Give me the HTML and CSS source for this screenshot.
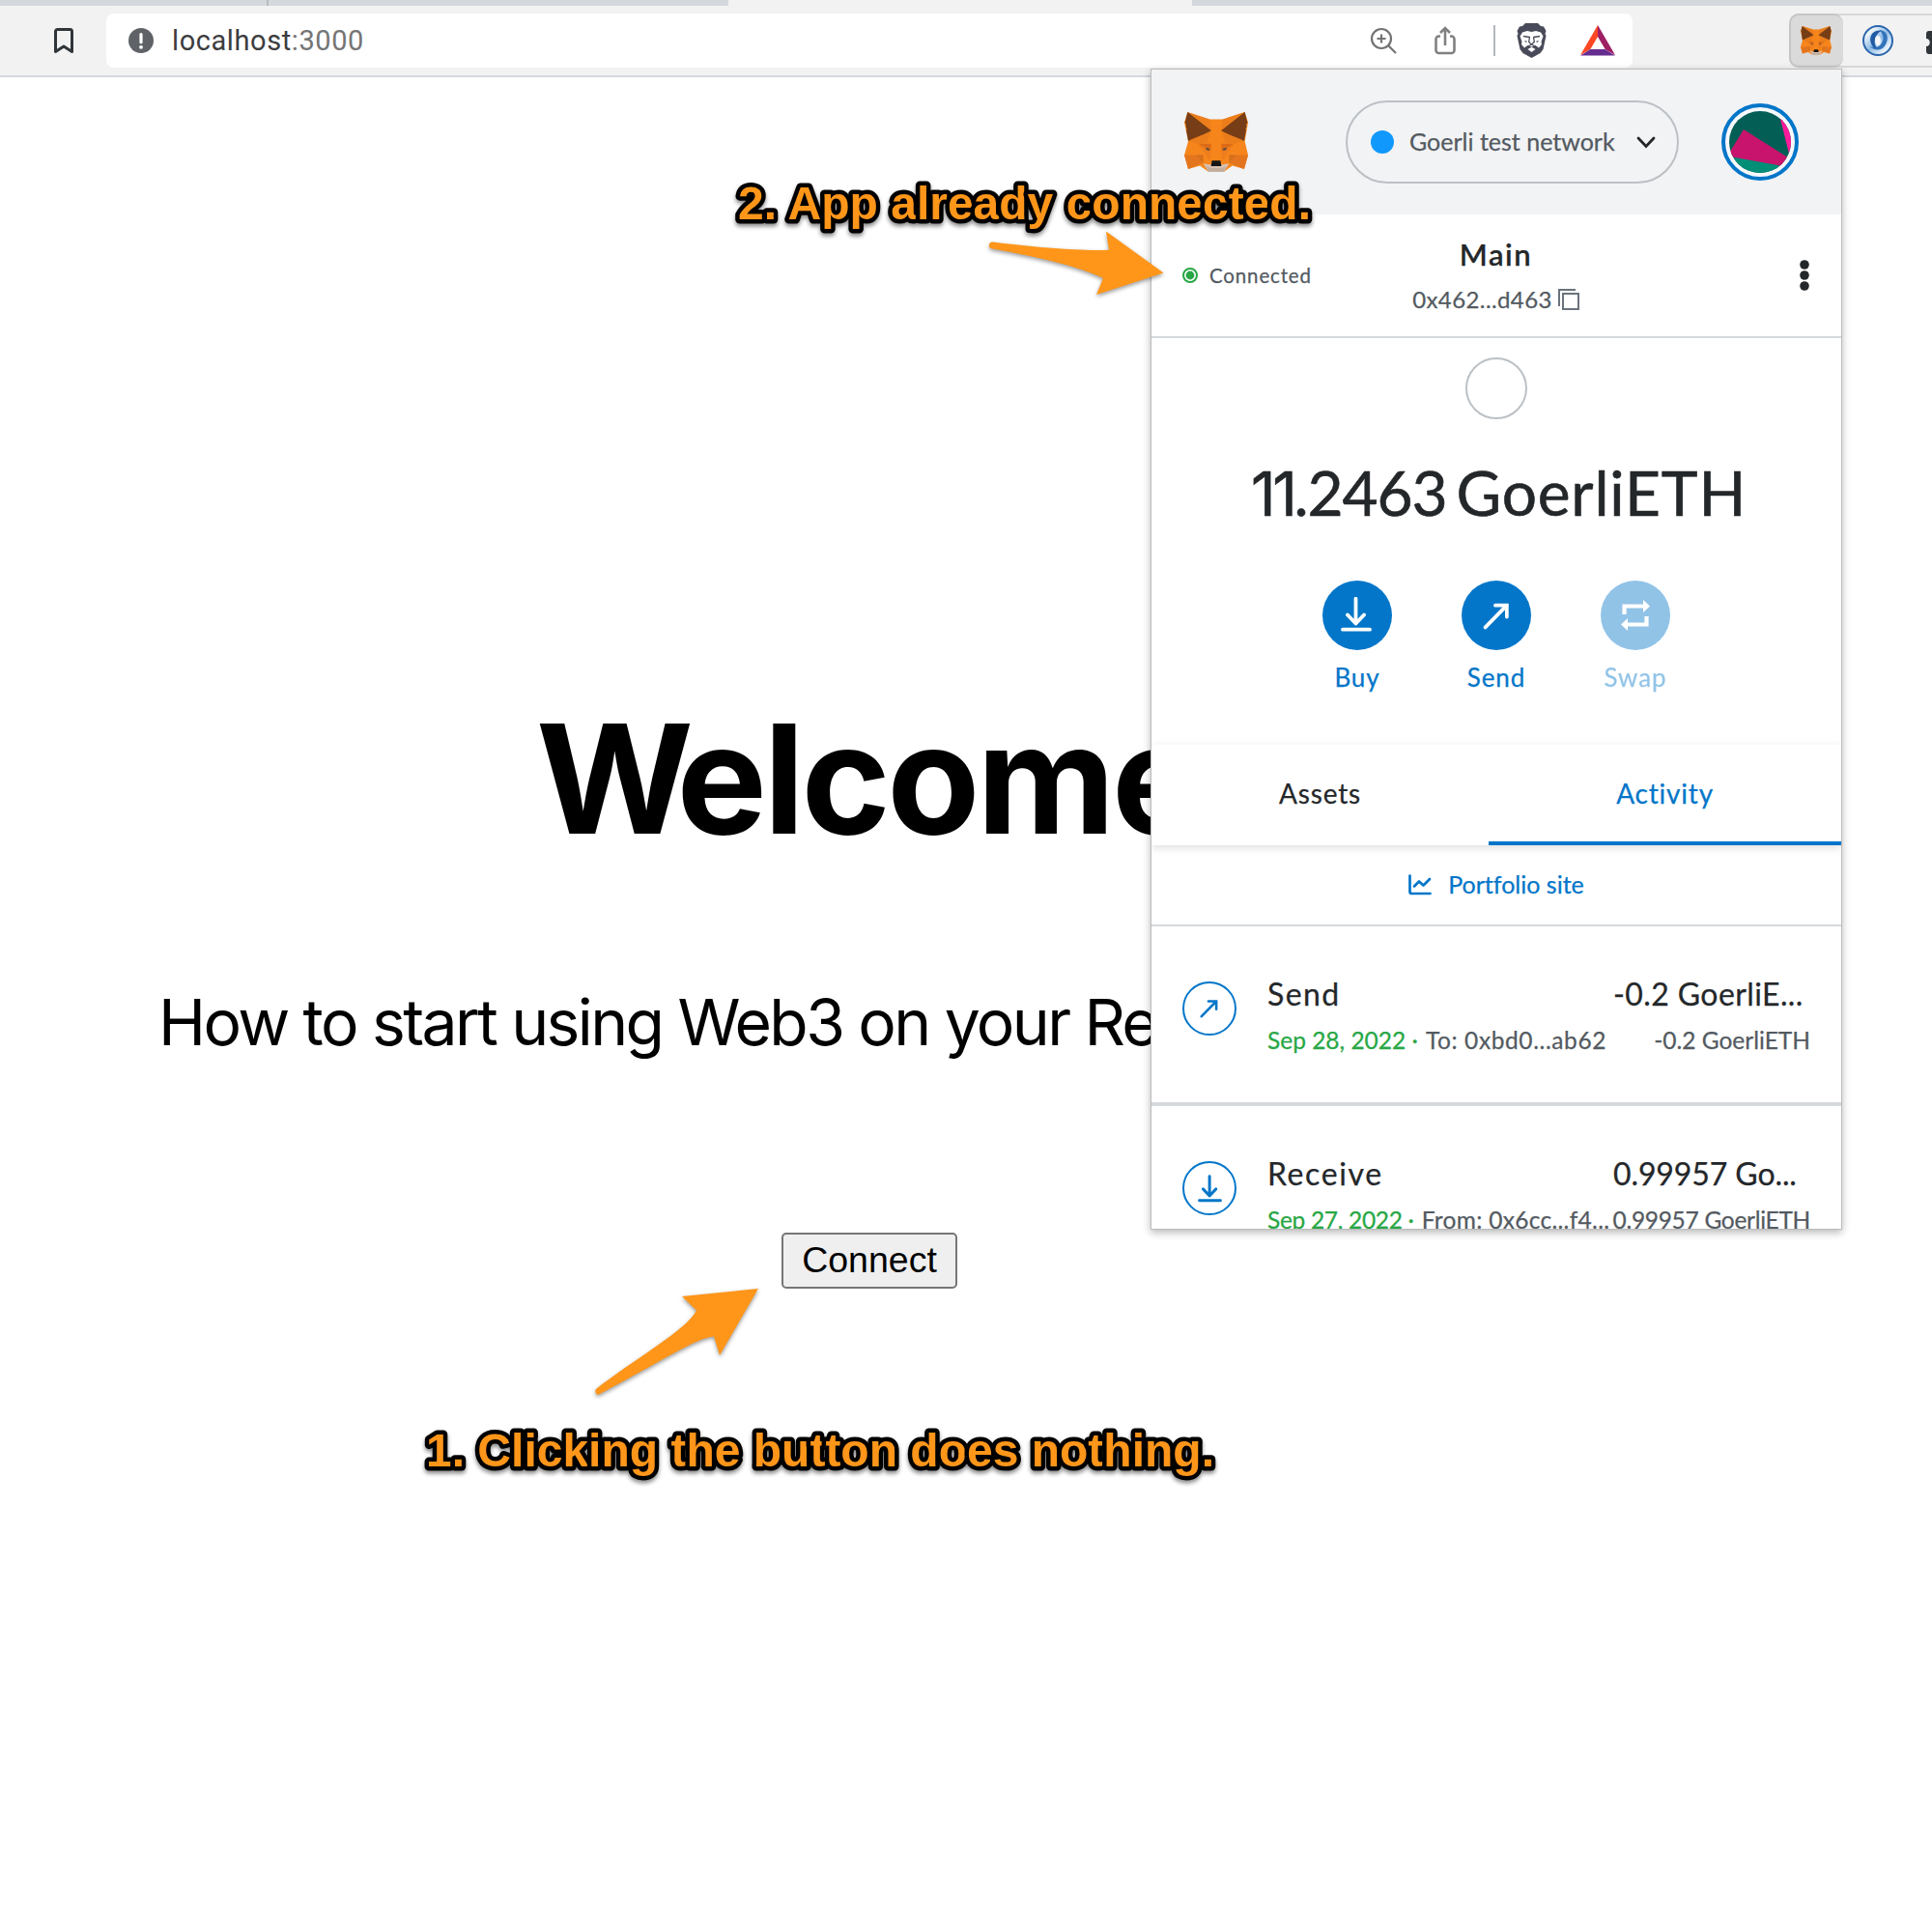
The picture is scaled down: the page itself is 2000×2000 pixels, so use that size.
FILE: index.html
```html
<!DOCTYPE html>
<html lang="en">
<head>
<meta charset="utf-8">
<title>Welcome</title>
<link rel="stylesheet" href="styles.css">
</head>
<body>
<svg class="defs" width="0" height="0">
  <symbol id="fox" viewBox="0 0 196 184">
    <path fill="#f6851b" d="M10 0 78 22h40L186 0l10 32-10 58 10 42-12 43-36-10-26 18H74l-26-18-36 10L0 132l12-42L0 32z"/>
    <path fill="#e2761b" d="M10 0 78 22l5 35zM186 0l-68 22-5 35zM12 88l48-22 22-9-12 38-26 4zM184 88l-48-22-22-9 12 38 26 4z" opacity=".5"/>
    <path fill="#763d16" class="ear" d="M10 0 2 32l4 8-2 4 4 7-2 4 6 34 10-5 38-16 23-11zM186 0l8 32-4 8 2 4-4 7 2 4-6 34-10-5-38-16-23-11z"/>
    <path fill="#e4751f" d="M0 132h58v24l-46 19zM196 132h-58v24l46 19z"/>
    <path fill="#d5701c" d="M36 132h22v24zM160 132h-22v24z"/>
    <path fill="#dc6a17" d="m44 99 38-2v22zM152 99l-38-2v22z"/>
    <path fill="#e4751f" d="m44 99 38 20-4 29-12-18zM152 99l-38 20 4 29 12-18z" opacity=".5"/>
    <path fill="#4a4648" d="m64 110 12 2 2 6-8-1zM132 110l-12 2-2 6 8-1z"/>
    <path fill="#d7c1b3" d="m58 158 24 4h32l24-4-16 25H74z"/>
    <path fill="#c0ad9e" d="m68 166 14 6h32l14-6-6 17H74z"/>
    <path fill="#161616" d="M85 149h26l3 17H82z"/>
  </symbol>
  <symbol id="arrow-out" viewBox="0 0 28 28">
    <path d="M2.5 25.5 24 3.5M12.5 3.5H24V15" fill="none" stroke="currentColor" stroke-width="3.6" stroke-linecap="round"/>
  </symbol>
  <symbol id="arrow-down" viewBox="0 0 32 36">
    <path d="M15.5 1.8V26M7 18.500l8.500 9 8.500-9M2 33.700h28" fill="none" stroke="currentColor" stroke-width="3.8" stroke-linecap="round" stroke-linejoin="round"/>
  </symbol>
</svg>

<header class="browser">
  <div class="tabstrip"><span class="tab-edge"></span><span class="tab-active"></span></div>
  <div class="toolbar">
    <svg class="bookmark" width="22" height="28" viewBox="0 0 22 28"><path d="M2.500 25.500V4.500a2 2 0 0 1 2-2h13a2 2 0 0 1 2 2v21L11 20z" fill="none" stroke="#30353a" stroke-width="3" stroke-linejoin="round"/></svg>
    <div class="address">
      <svg class="info" width="26" height="26" viewBox="0 0 26 26"><circle cx="13" cy="13" r="13" fill="#5f6368"/><path d="M13 6.500v8.200" stroke="#fff" stroke-width="3.200" stroke-linecap="round"/><circle cx="13" cy="19.800" r="1.900" fill="#fff"/></svg>
      <span class="url">localhost<span class="port">:3000</span></span>
      <div class="address-icons">
        <svg class="i-zoom" width="28" height="28" viewBox="0 0 28 28" fill="none" stroke="#737373" stroke-width="2.200"><circle cx="12" cy="12" r="10"/><path d="M12 7.500v9M7.500 12h9M19 19l8 8"/></svg>
        <svg class="i-share" width="22" height="30" viewBox="0 0 22 30" fill="none" stroke="#808080" stroke-width="2.600"><path d="M6 10.500H4.500a3 3 0 0 0-3 3V25a3 3 0 0 0 3 3h13a3 3 0 0 0 3-3V13.500a3 3 0 0 0-3-3H16M11 20V2.500M6 7l5-5 5 5"/></svg>
        <span class="bar"></span>
        <svg class="i-brave" width="31" height="36" viewBox="0 0 31 36"><path fill="#4a4b5a" d="m9 0h13l3 3 3 .5 2.500 4.500-1 3 1 2-3 14-3 4L15.500 36 6.500 31l-3-4-3-14 1-2-1-3L3 3.500 6 3z"/><path fill="#fff" d="m6 9.500 5-1.500 4.500 1L20 8l5 1.500 2.500 4-2 5.500.5 3-3 3.500-3.500-2.500-4 1.500-4-1.500L8 25.500 5 22l.5-3-2-5.500z"/><path fill="none" stroke="#4a4b5a" stroke-width="1.300" d="M7 13.500l6.500 1M24 13.500l-6.500 1M13.500 14l-.8 5.500 2.800 2.500 2.800-2.500-.8-5.500M8.500 18.500l2 .8M22.500 18.500l-2 .8M10 25l5.500-3 5.500 3"/><path fill="#fff" d="m11.500 27 4-2.200 4 2.200-4 3z"/></svg>
        <svg class="i-bat" width="36" height="32" viewBox="0 0 36 32"><path fill="#ff4724" d="M18 0v13l-7.500 12L0 31z"/><path fill="#9e1f63" d="m18 0 18 31-10.500-6L18 13z"/><path fill="#662d91" d="M0 31.500 10.500 25h15L36 31.500z"/><path fill="#fff" d="m18 12 7.500 13h-15z"/></svg>
      </div>
    </div>
    <div class="extensions">
      <span class="ext-active"><svg width="32" height="30"><use href="#fox"/></svg></span>
      <svg class="swirl" width="32" height="32" viewBox="0 0 32 32">
        <defs><linearGradient id="sw" x1="0" y1="0" x2="1" y2="1"><stop offset="0" stop-color="#2a6ab2"/><stop offset=".2" stop-color="#f2f7fc"/><stop offset=".5" stop-color="#8fbbe6"/><stop offset=".8" stop-color="#eaf3fc"/><stop offset="1" stop-color="#3f7cc0"/></linearGradient></defs>
        <circle cx="16" cy="16" r="15" fill="url(#sw)" stroke="#2a65ab" stroke-width="2"/>
        <path d="M17 5c9 0 12 10 5 18-5 4-11 3-14-1 4 2 9 1 11-2 4-5 3-11-2-15z" fill="#3273ba"/>
        <path d="M19 6C11 4 6 12 9 19c1 3 3 5 6 5-4-5-3-13 4-18z" fill="#1f5aa2"/>
        <ellipse cx="16" cy="16" rx="3" ry="5.200" fill="#f4f6f8"/>
      </svg>
      <svg class="puzzle" width="6" height="24" viewBox="0 0 6 24"><path fill="#30353a" d="M6 0H3a3 3 0 0 0-3 3v5c5 0 5 8 0 8v5a3 3 0 0 0 3 3h3z"/></svg>
    </div>
  </div>
</header>

<main class="page">
  <h1>Welcome to</h1>
  <p>How to start using Web3 on your React</p>
  <button>Connect</button>
</main>

<section class="popup">
  <div class="popup-head">
    <svg class="logo" width="66" height="62"><use href="#fox"/></svg>
    <div class="network"><i></i><span>Goerli test network</span><svg width="20" height="13" viewBox="0 0 20 13"><path d="m2 2 8 8.500L18 2" fill="none" stroke="#24272a" stroke-width="2.800" stroke-linecap="round"/></svg></div>
    <svg class="avatar" width="80" height="80" viewBox="0 0 80 80"><defs><clipPath id="av"><circle cx="40" cy="40" r="32"/></clipPath></defs><circle cx="40" cy="40" r="38" fill="#f7f8fa" stroke="#0376c9" stroke-width="4"/><g clip-path="url(#av)"><path fill="#035e56" d="M0 0h80v80H0z"/><path fill="#ff1a9c" d="M59 8 80 10v50L71 56z"/><path fill="#c8146c" d="M23 27 72 58l-8 8-48-9-9-4z"/><path fill="#018e77" d="m14 56 50 9v15H10z"/></g></svg>
  </div>
  <div class="account">
    <div class="status"><svg width="16" height="16" viewBox="0 0 16 16"><circle cx="8" cy="8" r="7" fill="none" stroke="#28a745" stroke-width="2"/><circle cx="8" cy="8" r="4.400" fill="#28a745"/></svg><span>Connected</span></div>
    <div class="who"><strong>Main</strong><div class="addr"><span>0x462...d463</span><svg width="22" height="22" viewBox="0 0 22 22" fill="none" stroke="#6a737d" stroke-width="2"><path d="M1 18V1h17M5 5h16v16H5z"/></svg></div></div>
    <svg class="kebab" width="10" height="32" viewBox="0 0 10 32" fill="#24272a"><circle cx="5" cy="5" r="4.800"/><circle cx="5" cy="16" r="4.800"/><circle cx="5" cy="27" r="4.800"/></svg>
  </div>
  <div class="overview">
    <div class="token"></div>
    <div class="balance"><span class="amount"><span class="ones">11</span>.2463</span><span class="unit">GoerliETH</span></div>
    <div class="actions">
      <div class="action"><b><svg class="down" width="32" height="36"><use href="#arrow-down"/></svg></b><span>Buy</span></div>
      <div class="action"><b><svg width="29" height="29"><use href="#arrow-out"/></svg></b><span>Send</span></div>
      <div class="action off"><b><svg width="34" height="34" viewBox="0 0 34 34"><path d="M5.500 16V7.500H25M28.500 18v8.500H9" fill="none" stroke="#fff" stroke-width="4.200"/><path fill="#fff" d="m25 1 7 6.500-7 6.500zM9 20l-7 6.500L9 33z"/></svg></b><span>Swap</span></div>
    </div>
  </div>
  <nav class="tabs"><span class="assets">Assets</span><span class="activity">Activity</span></nav>
  <div class="portfolio"><svg width="24" height="22" viewBox="0 0 24 22" fill="none" stroke="#0376c9" stroke-width="2.700" stroke-linecap="round" stroke-linejoin="round"><path d="M1.500 1.500V18a2 2 0 0 0 2 2H22.500M6 12.500l5-5 4.500 4L22 5"/></svg><span>Portfolio site</span></div>
  <div class="item">
    <b class="ring"><svg width="20" height="20"><use href="#arrow-out"/></svg></b>
    <div class="what"><div class="title t-send">Send</div><div class="sub"><span class="date d1">Sep 28, 2022 ·</span><span class="peer p1">To: 0xbd0...ab62</span></div></div>
    <div class="value"><div class="title v1">-0.2 GoerliE...</div><div class="sub s1">-0.2 GoerliETH</div></div>
  </div>
  <div class="item">
    <b class="ring"><svg width="25" height="29"><use href="#arrow-down"/></svg></b>
    <div class="what"><div class="title t-receive">Receive</div><div class="sub"><span class="date d2">Sep 27, 2022 ·</span><span class="peer p2">From: 0x6cc...f4...</span></div></div>
    <div class="value"><div class="title v2">0.99957 Go...</div><div class="sub s2">0.99957 GoerliETH</div></div>
  </div>
</section>

<svg class="notes" width="2000" height="2000" viewBox="0 0 2000 2000">
  <g class="arrows">
    <path d="M1028 250.500C1070 256 1120 260 1148 258.700L1145 239.500 1204.500 282.500 1135 305 1142 288C1120 277 1080 267 1027 257.500A3.500 3.500 0 0 1 1028 250.500z"/>
    <path d="M617 1438C655 1408 712 1376 721 1356.500L706 1342 785 1334 745 1403 739 1383.500C722 1384 680 1412 619 1444A4 4 0 0 1 617 1438z"/>
  </g>
  <text x="764" y="227" textLength="593">2. App already connected.</text>
  <text x="441" y="1518" textLength="816">1. Clicking the button does nothing.</text>
</svg>
</body>
</html>
```

FILE: styles.css
```css
* { box-sizing: border-box; }
body { margin: 0; width: 2000px; height: 2000px; overflow: hidden; position: relative; background: #fff; font-family: Lato, sans-serif; }
svg { display: block; flex: none; }
.defs { position: absolute; }

.tabstrip { display: flex; height: 6px; background: #d4d8dc; }
.tab-edge { width: 2px; margin-left: 276px; background: #b9bcbf; }
.tab-active { width: 480px; margin-left: 476px; background: #f2f2f2; }
.toolbar { display: flex; align-items: center; height: 74px; background: #f2f2f2; border-bottom: 2px solid #d4d8dc; }
.bookmark { margin-left: 55px; }
.address { display: flex; align-items: center; width: 1580px; height: 56px; margin-left: 33px; padding-left: 23px; background: #fff; border-radius: 8px; }
.url { margin-left: 19px; font: 29px/40px Roboto, sans-serif; letter-spacing: .58px; color: #3c3d3f; }
.port { color: #757575; }
.address-icons { display: flex; align-items: center; margin-left: auto; padding-right: 18px; }
.i-share { margin-left: 39px; }
.bar { width: 2px; height: 32px; margin: 0 22px 0 39px; background: #b4b8bd; }
.i-bat { margin-left: 35px; }
.extensions { display: flex; align-items: center; width: 148px; height: 56px; margin-left: auto; border: solid #d8d8d8; border-width: 2px 0; border-radius: 10px 0 0 10px; background: #f2f2f2; }
.ext-active { display: flex; align-items: center; justify-content: center; width: 56px; height: 56px; padding-right: 3px; background: #dadada; border: solid #c5c5c5; border-width: 2px 0 2px 2px; border-radius: 10px; }
.ext-active .ear { fill: #9a4f20; }
.swirl { margin-left: 20px; }
.puzzle { margin-left: auto; margin-top: 4px; }

.page { display: flex; flex-direction: column; align-items: flex-start; padding: 626px 0 0 164px; font-family: Inter, sans-serif; color: #000; }
.page h1 { margin: 0 0 0 391px; font-size: 157px; line-height: 200px; font-weight: 700; letter-spacing: -3.5px; white-space: nowrap; }
.page h1::first-letter { letter-spacing: -17.5px; }
.page p { margin: 102px 0 0; font-size: 66px; line-height: 100px; letter-spacing: -2.6px; white-space: nowrap; }
.page button { width: 182px; height: 58px; margin: 168px 0 0 645px; padding: 0 0 2px; border: 2px solid #767676; border-radius: 5px; background: #efefef; color: #000; font: 37.5px/50px "Liberation Sans", sans-serif; }

.popup { position: absolute; left: 1191px; top: 71px; width: 716px; height: 1202px; overflow: hidden; background: #fff; border: 1px solid #b9bbbd; box-shadow: 0 3px 8px rgba(0,0,0,.28); color: #24272a; white-space: nowrap; font-variant-ligatures: none; -webkit-text-stroke: .25px currentColor; }
.popup-head { display: flex; align-items: center; height: 150px; padding: 0 44px 0 34px; background: #f2f3f5; }
.network { display: flex; align-items: center; width: 345px; height: 86px; margin-left: 101px; padding-left: 24px; border: 2px solid #bbc0c5; border-radius: 43px; color: #535a61; font-size: 25px; }
.network i { width: 24px; height: 24px; border-radius: 50%; background: #1098fc; }
.network span { margin: 0 auto 0 16px; padding-bottom: 2px; }
.network svg { margin-right: 22px; }
.avatar { margin-left: auto; }

.account { display: grid; grid-template-columns: 1fr auto 1fr; align-items: center; height: 128px; padding: 0 33px 0 32px; border-bottom: 2px solid #d6d9dc; }
.status { display: flex; align-items: center; gap: 12px; color: #535a61; font-size: 20.500px; letter-spacing: .85px; }
.status span { padding-bottom: 1px; }
.who { display: flex; flex-direction: column; align-items: center; gap: 12px; }
.who strong { font-size: 31px; line-height: 38px; font-weight: 600; letter-spacing: 1.5px; }
.addr { display: flex; align-items: center; gap: 6px; font-size: 24px; line-height: 32px; letter-spacing: .4px; color: #535a61; }
.kebab { justify-self: end; }

.overview { display: flex; flex-direction: column; align-items: center; height: 420px; padding-top: 20px; }
.token { width: 64px; height: 64px; border: 2px solid #bbc0c5; border-radius: 50%; }
.balance { display: flex; gap: 10px; height: 80px; margin-top: 36px; padding-left: 5px; font-size: 64px; line-height: 80px; -webkit-text-stroke-width: .6px; }
.amount { letter-spacing: -1.1px; }
.ones { font-family: Inter, sans-serif; font-size: 63px; letter-spacing: -3.4px; }
.unit { letter-spacing: .8px; }
.actions { display: flex; gap: 72px; margin-top: 51px; }
.action { display: flex; flex-direction: column; align-items: center; width: 72px; gap: 12px; color: #0376c9; font-size: 26px; line-height: 32px; letter-spacing: .9px; }
.action b { display: flex; align-items: center; justify-content: center; width: 72px; height: 72px; border-radius: 50%; background: #0376c9; color: #fff; }
.action .down { margin-top: -2px; margin-right: 2px; }
.off { opacity: .43; }

.tabs { display: flex; height: 105px; border-top: 1px solid #fafafa; box-shadow: 0 3px 8px rgba(0,0,0,.12); font-size: 28px; line-height: 100px; letter-spacing: .8px; text-align: center; }
.assets { width: 349px; }
.activity { flex: 1; color: #0376c9; border-bottom: 4px solid #0376c9; }
.portfolio { display: flex; align-items: center; justify-content: center; gap: 17px; height: 84px; border-bottom: 2px solid #d6d9dc; color: #0376c9; font-size: 25px; }
.portfolio span { padding-bottom: 3px; }

.item { display: grid; grid-template-columns: 56px 391px 203px; height: 186px; padding: 50px 32px 0; border-bottom: 4px solid #d6d9dc; }
.ring { display: flex; align-items: center; justify-content: center; width: 56px; height: 56px; margin-top: 7px; border: 2px solid #0376c9; border-radius: 50%; color: #0376c9; }
.what { padding-left: 32px; }
.title { height: 40px; font-size: 32px; line-height: 39px; }
.sub { display: flex; margin-top: 12px; font-size: 24.500px; line-height: 31px; color: #535a61; }
.value .title { margin-left: -1px; }
.value .sub { justify-content: flex-end; }
.date { color: #28a745; margin-right: 8px; }
.t-send { letter-spacing: 1.4px; }
.t-receive { letter-spacing: 1.6px; }
.v1 { letter-spacing: .4px; }
.v2 { letter-spacing: -.1px; }
.p1 { letter-spacing: .6px; }
.d2 { letter-spacing: -.3px; }
.p2 { letter-spacing: .3px; }
.s2 { letter-spacing: -.3px; }

.notes { position: absolute; left: 0; top: 0; }
.notes text { font: bold 48px "Liberation Sans", sans-serif; fill: #ff961a; stroke: #000; stroke-width: 9px; stroke-linejoin: round; paint-order: stroke; filter: drop-shadow(0 3px 2px rgba(0,0,0,.45)); }
.arrows { fill: #ff961a; filter: drop-shadow(0 2px 2px rgba(0,0,0,.4)); }
```
